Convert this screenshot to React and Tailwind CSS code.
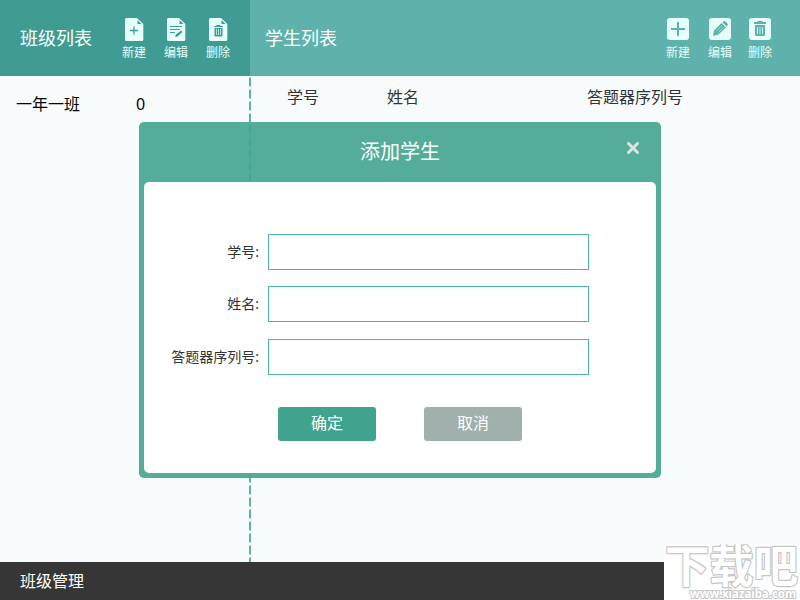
import React, { useState } from "react";

const FilePage = ({ children }) => (
  <svg width="19" height="23" viewBox="0 0 19 23" fill="none">
    <path d="M1.500 0H12L18.300 6V21.500a1.500 1.500 0 0 1-1.500 1.500H1.500a1.500 1.500 0 0 1-1.500-1.500V1.500a1.500 1.500 0 0 1 1.500-1.500Z" fill="#e6fffb" />
    <path d="M12.500 2V6H16.500Z" fill="#409c92" />
    {children}
  </svg>
);

const FileAddIcon = () => (
  <FilePage>
    <path d="M5 12.500H13M9 8.500V16.500" stroke="#409c92" strokeWidth="1.300" />
  </FilePage>
);

const FileEditIcon = () => (
  <FilePage>
    <path d="M3 8.500H15M3 11.500H13M3 14.500H8" stroke="#409c92" strokeWidth="1" />
    <path d="M8 19L9 16.500L14 12.500L15.500 14L10.500 18.500Z" fill="#409c92" />
  </FilePage>
);

const FileTrashIcon = () => (
  <FilePage>
    <path d="M5 8.500H14M7.500 7.500H11.500" stroke="#409c92" strokeWidth="1.200" />
    <path d="M5.500 10H13.500V17.500a1 1 0 0 1-1 1H6.500a1 1 0 0 1-1-1Z" fill="#409c92" />
    <path d="M7.500 11V17M9.500 11V17M11.500 11V17" stroke="#e6fffb" strokeWidth="0.700" />
  </FilePage>
);

const Tile = ({ children }) => (
  <svg width="22" height="22" viewBox="0 0 22 22" fill="none">
    <rect width="22" height="22" rx="3" fill="#e6fffb" />
    {children}
  </svg>
);

const AddIcon = () => (
  <Tile>
    <path d="M4 11H18M11 4V18" stroke="#5eb2ab" strokeWidth="2" />
  </Tile>
);

const PencilIcon = () => (
  <Tile>
    <path d="M4 18L5 12.500L12.500 5L17 9.500L9.500 16.500Z" fill="#5eb2ab" />
    <path d="M13.300 4.200L14.500 3.200Q15.500 2.500 16.500 3.500L18.500 5.500Q19.300 6.500 18.500 7.500L17.700 8.600Z" fill="#5eb2ab" />
    <path d="M7.500 13L13 7.500M9.500 14.500L15 9" stroke="#e6fffb" strokeWidth="0.500" />
  </Tile>
);

const TrashIcon = () => (
  <Tile>
    <path d="M5 5H17" stroke="#5eb2ab" strokeWidth="2" />
    <path d="M8.500 3.500H13.500" stroke="#5eb2ab" strokeWidth="1" />
    <path d="M6 7H16V16.500a1.500 1.500 0 0 1-1.500 1.500H7.500a1.500 1.500 0 0 1-1.500-1.500Z" fill="#5eb2ab" />
    <path d="M8.500 9V16M11 9V16M13.500 9V16" stroke="#e6fffb" strokeWidth="0.800" />
  </Tile>
);

const ToolButton = ({ label, children }) => (
  <button type="button" className="flex w-6 flex-col items-center text-xs leading-4 whitespace-nowrap text-[#e6fffb]">
    <span className="flex h-[27px] items-start">{children}</span>
    {label}
  </button>
);

const fields = [
  { name: "number", label: "学号:" },
  { name: "studentName", label: "姓名:" },
  { name: "serial", label: "答题器序列号:" },
];

const App = () => {
  const [open, setOpen] = useState(true);
  const [formData, setFormData] = useState({ number: "", studentName: "", serial: "" });

  const handleChange = (e) => {
    const { name, value } = e.target;
    setFormData({ ...formData, [name]: value });
  };

  return (
    <div className="relative flex h-[600px] w-[800px] flex-col overflow-hidden bg-[#f7fbfc] font-['Noto_Sans','Noto_Sans_CJK_SC',sans-serif] text-base leading-6 text-[#333]">
      {/* Top bar */}
      <header className="flex h-19 shrink-0 text-white">
        <div className="flex w-[250px] justify-between bg-[#409c92] pr-5 pl-5">
          <h1 className="pt-[26px] text-lg leading-6">班级列表</h1>
          <div className="flex gap-[18px] pt-[18px]">
            <ToolButton label="新建"><FileAddIcon /></ToolButton>
            <ToolButton label="编辑"><FileEditIcon /></ToolButton>
            <ToolButton label="删除"><FileTrashIcon /></ToolButton>
          </div>
        </div>
        <div className="flex flex-1 justify-between bg-[#5eb2ab] pr-7 pl-[15px]">
          <h1 className="pt-[26px] text-lg leading-6">学生列表</h1>
          <div className="flex pt-[18px]">
            <ToolButton label="新建"><AddIcon /></ToolButton>
            <div className="mr-4 ml-[18px]">
              <ToolButton label="编辑"><PencilIcon /></ToolButton>
            </div>
            <ToolButton label="删除"><TrashIcon /></ToolButton>
          </div>
        </div>
      </header>

      {/* Class list and student table */}
      <main className="flex flex-1">
        <div className="flex h-14 w-[249px] items-center pl-4 text-black">
          <span className="w-[120px]">一年一班</span>
          <span>0</span>
        </div>
        <div className="w-0.5 bg-[repeating-linear-gradient(to_bottom,transparent_0px,transparent_1px,#a5d3cf_1px,#a5d3cf_2px,#5eb2ab_2px,#5eb2ab_10px,#a5d3cf_10px,#a5d3cf_11px,transparent_11px,transparent_12px)]" />
        <div className="flex h-[42px] flex-1 items-center pl-9">
          <span className="w-[100px]">学号</span>
          <span className="w-[200px]">姓名</span>
          <span>答题器序列号</span>
        </div>
      </main>

      <footer className="flex h-[38px] shrink-0 items-center bg-[#363636] pl-5 text-white">班级管理</footer>

      {/* Add student dialog */}
      {open && (
        <div className="absolute top-[122px] left-[139px] flex h-[356px] w-[522px] flex-col rounded-[5px] bg-[#40a48de6] p-[5px] pt-0">
          <div className="grid h-15 shrink-0 grid-cols-[1fr_auto_1fr] text-white">
            <h2 className="col-start-2 pt-4 text-xl leading-7">添加学生</h2>
            <button type="button" className="mt-5 mr-[17px] h-3 w-3 justify-self-end" onClick={() => setOpen(false)}>
              <svg width="12" height="12" viewBox="0 0 12 12">
                <path d="M1.500 1.500L10.500 10.500M10.500 1.500L1.500 10.500" stroke="#dfe4e2" strokeWidth="3" strokeLinecap="round" />
              </svg>
            </button>
          </div>
          <form className="flex-1 rounded-[5px] bg-white pt-[52px]" onSubmit={(e) => e.preventDefault()}>
            <div className="flex flex-col gap-[16.250px]">
              {fields.map((field) => (
                <div className="flex items-center" key={field.name}>
                  <label htmlFor={field.name} className="w-[115px] text-right text-sm leading-5">{field.label}</label>
                  <input
                    id={field.name}
                    name={field.name}
                    type="text"
                    className="ml-[9px] h-9 w-[321px] border border-[#4db6a8] bg-white px-2 outline-none"
                    value={formData[field.name]}
                    onChange={handleChange}
                  />
                </div>
              ))}
            </div>
            <div className="mt-8 flex gap-12 pl-[134px] leading-[33px] text-white">
              <button type="submit" className="h-[34px] w-[98px] rounded-[3px] bg-[#40a48d] pb-px">确定</button>
              <button type="button" className="h-[34px] w-[98px] rounded-[3px] bg-[#a0b0ac] pb-px" onClick={() => setOpen(false)}>取消</button>
            </div>
          </form>
        </div>
      )}

      {/* Site badge in the corner */}
      <div className="absolute right-0 bottom-0 h-14 w-[136px] bg-white">
        <svg width="136" height="56" viewBox="0 0 136 56" fill="#fff" stroke="#c6c6c6" strokeLinejoin="round" paintOrder="stroke">
          <text x="1" y="38.500" fontSize="45" strokeWidth="2.400" textLength="133" lengthAdjust="spacingAndGlyphs" className="font-['Noto_Sans_CJK_SC',sans-serif] font-bold">下载吧</text>
          <text x="26" y="54" fontSize="12" strokeWidth="2" textLength="106" lengthAdjust="spacingAndGlyphs" className="font-['Noto_Sans',sans-serif] font-bold">www.xiazaiba.com</text>
        </svg>
      </div>
    </div>
  );
};

export default App;
